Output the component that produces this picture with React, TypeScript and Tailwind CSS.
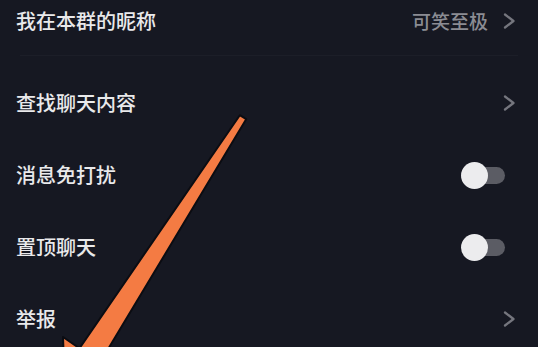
import React from "react";

const font = { fontFamily: '"Noto Sans CJK SC", "Noto Sans", sans-serif' };

function Chevron() {
  return (
    <svg width="13" height="16" viewBox="0 0 13 16" fill="none">
      <polyline
        points="2,1.5 10.5,8 2,14.5"
        stroke="#75767e"
        strokeWidth="2.3"
        strokeLinecap="round"
        strokeLinejoin="round"
      />
    </svg>
  );
}

function Toggle() {
  return (
    <div className="relative w-[44px] h-[27px]">
      <div className="absolute left-[6px] right-0 top-[5px] h-[17px] rounded-full bg-[#5b5c64]" />
      <div className="absolute left-0 top-0 w-[27px] h-[27px] rounded-full bg-[#ececee]" />
    </div>
  );
}

type Row = {
  label: string;
  kind: "link" | "toggle";
};

const rows: Row[] = [
  { label: "查找聊天内容", kind: "link" },
  { label: "消息免打扰", kind: "toggle" },
  { label: "置顶聊天", kind: "toggle" },
  { label: "举报", kind: "link" },
];

function SettingRow({ row }: { row: Row }) {
  return (
    <div
      className={`h-[72px] flex items-center justify-between pl-[16px] ${
        row.kind === "toggle" ? "pr-[33px]" : "pr-[22px]"
      }`}
    >
      <span className="text-[20px] font-medium text-[#e9e9eb]">{row.label}</span>
      {row.kind === "toggle" ? <Toggle /> : <Chevron />}
    </div>
  );
}

export default function App() {
  return (
    <div
      className="relative w-[538px] h-[347px] overflow-hidden bg-[#161822]"
      style={font}
    >
      <div className="h-[42px] flex items-center justify-between pl-[16px] pr-[22px]">
        <span className="text-[20px] font-medium text-[#e9e9eb]">我在本群的昵称</span>
        <div className="flex items-center gap-[15px]">
          <span className="text-[19px] font-medium text-[#8b8c93]">可笑至极</span>
          <Chevron />
        </div>
      </div>

      <div className="mt-[13px] mx-[20px] h-px bg-[#1c1e28]" />

      <div className="mt-[11px]">
        {rows.map((row) => (
          <SettingRow key={row.label} row={row} />
        ))}
      </div>

      {/* orange annotation arrow drawn over the list */}
      <svg
        className="absolute inset-0 pointer-events-none"
        width="538"
        height="347"
        viewBox="0 0 538 347"
      >
        <polygon
          points="239.8,115.2 246.2,119.2 100.5,361.7 116.8,373 65,392 63,337 79.5,348.3"
          fill="#f47b43"
          stroke="#0b0c12"
          strokeWidth="2"
          strokeLinejoin="round"
        />
      </svg>
    </div>
  );
}
